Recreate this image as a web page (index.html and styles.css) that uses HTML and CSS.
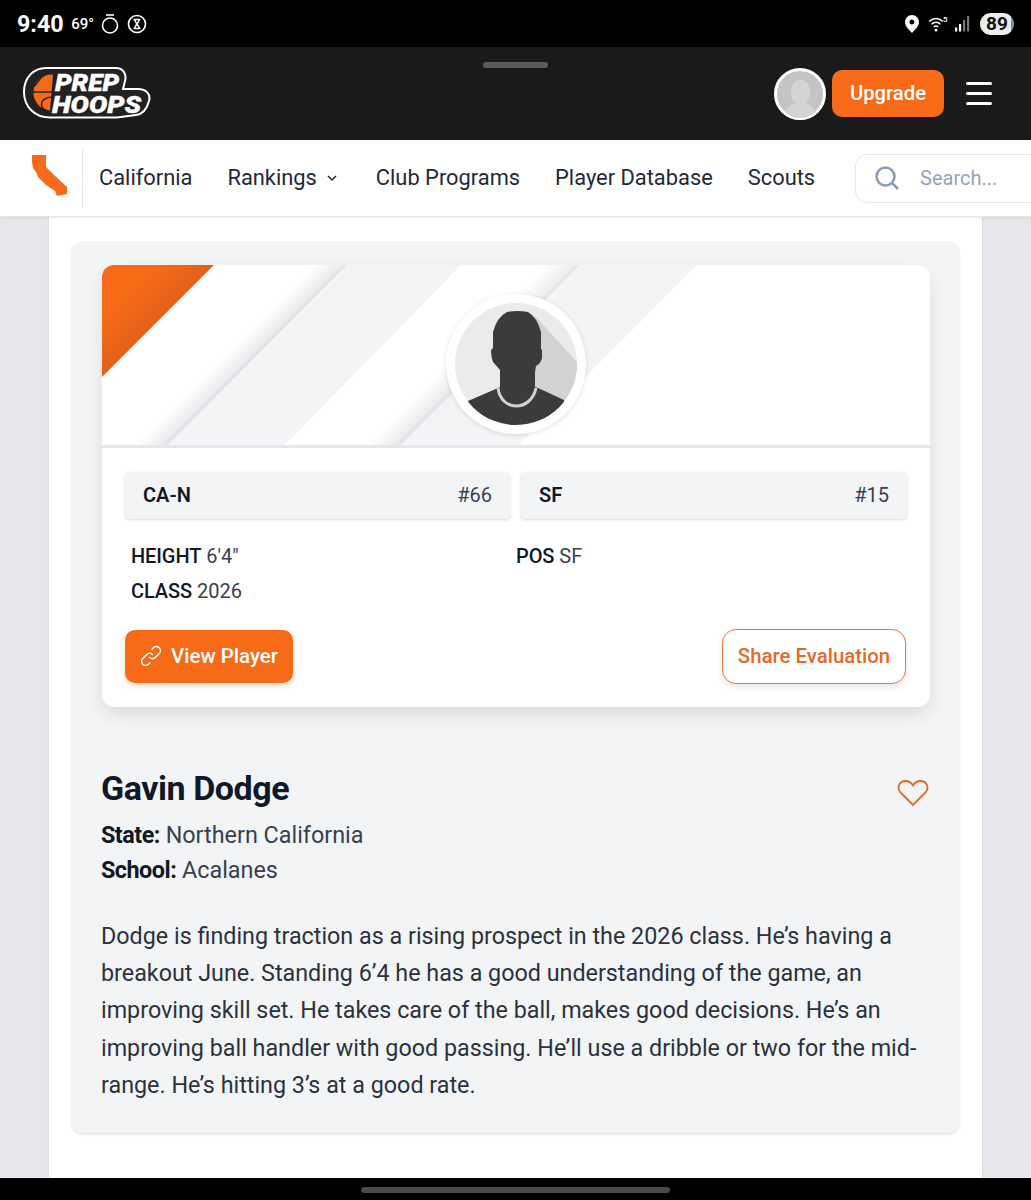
FILE: index.html
```html
<!DOCTYPE html>
<html lang="en">
<head>
<meta charset="utf-8">
<title>Gavin Dodge - Prep Hoops</title>
<link rel="stylesheet" href="styles.css">
</head>
<body>
<div class="status">
  <div class="status-left">
    <span class="clock">9:40</span>
    <span class="temp">69°</span>
    <svg class="st-ic" width="18" height="22" viewBox="0 0 18 22"><path d="M5 2h8" stroke="#fff" stroke-width="1.6"/><circle cx="9" cy="12.500" r="7.500" fill="none" stroke="#fff" stroke-width="1.600"/></svg>
    <svg class="st-ic" width="20" height="20" viewBox="0 0 20 20"><circle cx="10" cy="10" r="8.500" fill="none" stroke="#fff" stroke-width="1.700"/><path d="M6.500 5.500h7M6.500 14.500h7M7.500 5.500q1 2.500 2.500 4.500q1.500-2 2.500-4.500M7.500 14.500q1-2.500 2.500-4.500q1.500 2 2.500 4.500z" stroke="#fff" stroke-width="1.500" fill="none"/></svg>
  </div>
  <div class="status-right">
    <svg class="pin" width="14" height="18" viewBox="0 0 14 18"><path fill-rule="evenodd" d="M7 0a7 7 0 0 1 7 7c0 4-4 8-7 11-3-3-7-7-7-11a7 7 0 0 1 7-7zm0 4.500a2.500 2.500 0 1 0 0 5 2.500 2.500 0 0 0 0-5z" fill="#fff"/></svg>
    <svg class="wifi" width="20" height="16" viewBox="0 0 20 16"><g fill="none" stroke="#fff" stroke-width="1.500"><path d="M1 5.500q7-6 14 0M3.500 8.300q4.500-4 9 0M5.800 11q2.200-2 4.400 0"/></g><circle cx="8" cy="14" r="1.500" fill="#fff"/><text x="15" y="6" class="wifi5">5</text></svg>
    <svg width="17" height="17" viewBox="0 0 17 17"><path d="M1 12.500h2.200v4H1zM5 9h2.200v7.500H5z" fill="#fff"/><path d="M9 5h2.200v11.500H9zM13 1h2.200v15.500H13z" fill="#777"/></svg>
    <span class="battery">89</span>
  </div>
</div>

<header class="topbar">
  <svg class="logo" width="128" height="54" viewBox="23 67 128 54">
    <path d="M24 93C24 78 34 69 46 69H116C123 69 127 75 125 82L123 90H138C146 90 151 95 149 102C147 110 143 115 136 116L117 118.500H50C34 118.500 24 107 24 93Z" fill="#222" stroke="#fff" stroke-width="2"/>
    <path d="M53 75.500A18 18 0 1 0 50 111.500Z" fill="#f76a17"/>
    <path d="M46 75C37 80 38 88 30 89M29 93H52M47 112C38 108 40 99 52 98" fill="none" stroke="#222" stroke-width="1.400"/>
    <text class="logo-text"><tspan x="55" y="91.500" textLength="64" lengthAdjust="spacingAndGlyphs">PREP</tspan> <tspan x="52" y="113.500" textLength="89" lengthAdjust="spacingAndGlyphs">HOOPS</tspan></text>
  </svg>
  <div class="grabber"></div>
  <div class="top-actions">
    <svg class="user" width="52" height="52" viewBox="0 0 52 52">
      <circle cx="26" cy="26" r="24.500" fill="#c4c4c4" stroke="#fff" stroke-width="3"/>
      <ellipse cx="26.500" cy="24" rx="10" ry="12" fill="#d4d4d4"/>
      <path d="M11 44q4-7 11-9h9q7 2 11 9-7 6-16 6t-15-6z" fill="#d4d4d4"/>
    </svg>
    <a class="upgrade">Upgrade</a>
    <div class="burger"><i></i><i></i><i></i></div>
  </div>
</header>

<nav class="nav">
  <div class="state-cell">
    <svg width="37" height="44" viewBox="31 157 37 44"><path d="M32 158H46V170L54 178L67 190V197L57 199L55 194L46 188L38 180L36 175L33 171L32 165Z" fill="#f76a17"/></svg>
  </div>
  <ul class="nav-links">
    <li>California</li>
    <li class="has-caret">Rankings <svg width="10" height="7" viewBox="0 0 10 7"><path d="M1 1l4 4 4-4" fill="none" stroke="#1f2937" stroke-width="1.500"/></svg></li>
    <li>Club Programs</li>
    <li>Player Database</li>
    <li>Scouts</li>
  </ul>
  <div class="search">
    <svg width="26" height="26" viewBox="0 0 26 26"><circle cx="11.500" cy="11.500" r="9" fill="none" stroke="#8b9db3" stroke-width="2.600"/><path d="M18 18l6 6" stroke="#8b9db3" stroke-width="2.600"/></svg>
    <span>Search...</span>
  </div>
</nav>

<main class="page">
  <div class="column">
    <section class="panel">
      <article class="card">
        <div class="banner">
          <svg class="banner-art" width="828" height="180" viewBox="102 265 828 180" preserveAspectRatio="none">
            <defs>
              <linearGradient id="sh1" gradientUnits="userSpaceOnUse" x1="257" y1="355" x2="240" y2="338">
                <stop offset="0" stop-color="#e0e2e5"/>
                <stop offset="0.25" stop-color="#eeeff0"/>
                <stop offset="1" stop-color="#ffffff"/>
              </linearGradient>
              <linearGradient id="sh2" gradientUnits="userSpaceOnUse" x1="490" y1="355" x2="473" y2="338">
                <stop offset="0" stop-color="#e0e2e5"/>
                <stop offset="0.25" stop-color="#eeeff0"/>
                <stop offset="1" stop-color="#ffffff"/>
              </linearGradient>
              <linearGradient id="or" gradientUnits="userSpaceOnUse" x1="130" y1="293" x2="158" y2="321">
                <stop offset="0" stop-color="#f76a17"/>
                <stop offset="1" stop-color="#e2621a"/>
              </linearGradient>
            </defs>
            <polygon points="300,265 347,265 167,446 120,446" fill="url(#sh1)"/>
            <polygon points="533,265 580,265 400,446 353,446" fill="url(#sh2)"/>
            <polygon points="347,265 461,265 284,446 167,446" fill="#f3f4f6"/>
            <polygon points="580,265 697,265 517,446 400,446" fill="#f3f4f6"/>
            <polygon points="102,265 214,265 102,377" fill="url(#or)"/>
          </svg>
          <div class="avatar">
            <svg width="122" height="122" viewBox="0 0 122 122">
              <defs><clipPath id="ci"><circle cx="61" cy="61" r="61"/></clipPath></defs>
              <g clip-path="url(#ci)">
                <rect width="122" height="122" fill="#ebebeb"/>
                <path d="M80 13L123 60V122H60L60 60Z" fill="#d2d2d2"/>
                <path d="M52 9Q62 7 73 9Q82 14 86 29V46L87 47V55Q86 60 81 63L80 69V84L83 85L109 97V122H13V98L43 85L45 84V67L38 59Q36 54 36 47L38 45V29Q42 14 52 9Z" fill="#3b3b3b"/>
                <path d="M43 85C46 109 76 109 81 85" fill="none" stroke="#d2d2d2" stroke-width="3"/>
              </g>
            </svg>
          </div>
        </div>
        <div class="card-body">
          <div class="ranks">
            <div class="rank"><b>CA-N</b><span>#66</span></div>
            <div class="rank"><b>SF</b><span>#15</span></div>
          </div>
          <dl class="facts">
            <div><dt>HEIGHT</dt> <dd>6'4"</dd></div>
            <div><dt>POS</dt> <dd>SF</dd></div>
            <div><dt>CLASS</dt> <dd>2026</dd></div>
          </dl>
          <div class="buttons">
            <a class="btn-primary">
              <svg width="24" height="24" viewBox="0 0 24 24" fill="none" stroke="#fff" stroke-width="1.500" stroke-linecap="round"><path d="M10.500 13.500a4 4 0 0 0 5.700 0l4-4a4 4 0 0 0-5.700-5.700l-1.500 1.500"/><path d="M13.500 10.500a4 4 0 0 0-5.700 0l-4 4a4 4 0 0 0 5.700 5.700l1.500-1.500"/></svg>
              View Player
            </a>
            <a class="btn-outline">Share Evaluation</a>
          </div>
        </div>
      </article>

      <div class="detail">
        <div class="detail-head">
          <div>
            <h1>Gavin Dodge</h1>
            <p class="meta"><b>State:</b> Northern California</p>
            <p class="meta"><b>School:</b> Acalanes</p>
          </div>
          <svg class="heart" width="32" height="28" viewBox="0 0 32 28"><path d="M16 26L3.500 13.500C-1 8 3 2 8.500 2C12 2 14.500 4 16 6.500C17.500 4 20 2 23.500 2C29 2 33 8 28.500 13.500Z" fill="none" stroke="#e2672a" stroke-width="1.800"/></svg>
        </div>
        <p class="bio">Dodge is finding traction as a rising prospect in the 2026 class. He’s having a breakout June. Standing 6’4 he has a good understanding of the game, an improving skill set. He takes care of the ball, makes good decisions. He’s an improving ball handler with good passing. He’ll use a dribble or two for the mid-range. He’s hitting 3’s at a good rate.</p>
      </div>
    </section>
  </div>
</main>

<div class="navbar"><div class="home-pill"></div></div>
</body>
</html>
```

FILE: styles.css
```css
* { box-sizing: border-box; }
html, body { margin: 0; height: 1200px; overflow: hidden; }
body {
  display: flex;
  flex-direction: column;
  background: #e5e7eb;
  font-family: Roboto, "Liberation Sans", sans-serif;
  color: #1f2937;
}
p, h1, ul, dl, dd { margin: 0; padding: 0; }

.status {
  height: 47px;
  background: #000;
  color: #fff;
  display: flex;
  justify-content: space-between;
  align-items: center;
  padding: 0 17px;
  flex: none;
}
.status-left { display: flex; align-items: center; gap: 7.500px; }
.clock { font: 700 23.300px Roboto, sans-serif; }
.temp { font: 500 15px Roboto, sans-serif; }
.st-ic { display: block; }
.status-right { display: flex; align-items: center; gap: 9px; }
.wifi { margin-right: -3px; }
.pin { margin-left: 3px; }
.wifi5 { font: 500 8px Roboto, sans-serif; fill: #fff; }
.battery {
  width: 34px;
  height: 22px;
  border-radius: 11px;
  background: linear-gradient(90deg, #ececec 90%, #8a8a8a 90%);
  color: #111;
  font: 700 19px/22px Roboto, sans-serif;
  text-align: center;
}

.topbar {
  position: relative;
  height: 93px;
  background: #1a1a1a;
  display: flex;
  justify-content: space-between;
  align-items: center;
  padding: 0 39px 0 23px;
  flex: none;
}
.logo { display: block; margin-top: -1px; }
.logo-text { font: italic 900 23.500px Roboto, sans-serif; fill: #fff; stroke: #fff; stroke-width: 0.4px; }
.grabber {
  position: absolute;
  left: 483px;
  top: 15px;
  width: 65px;
  height: 6px;
  border-radius: 3px;
  background: #5a5a5a;
}
.top-actions { display: flex; align-items: center; }
.user { display: block; }
.upgrade {
  margin-left: 6px;
  width: 112px;
  height: 47px;
  border-radius: 10px;
  background: #f76a17;
  color: #fff;
  font: 500 20.300px/47px Roboto, sans-serif;
  text-align: center;
}
.burger { margin-left: 22px; width: 26px; display: flex; flex-direction: column; gap: 7px; }
.burger i { display: block; height: 3px; border-radius: 2px; background: #fff; }

.nav {
  height: 77px;
  background: #fff;
  display: flex;
  align-items: center;
  border-bottom: 1px solid #e5e7eb;
  box-shadow: 0 1px 3px rgba(0,0,0,.08);
  flex: none;
  position: relative;
  z-index: 1;
  overflow: hidden;
  white-space: nowrap;
}
.state-cell {
  flex: none;
  width: 83px;
  height: 60px;
  padding: 11px 0 0 31px;
  border-right: 1px solid #e5e7eb;
}
.state-cell svg { display: block; margin-top: -5px; }
.nav-links {
  list-style: none;
  display: flex;
  flex: none;
  gap: 35px;
  margin: -2px 0 0 16px;
  font-size: 21.850px;
  color: #1f2937;
}
.has-caret { display: flex; align-items: center; gap: 9px; }
.has-caret svg { margin: 2px 4px 0 1px; }
.search {
  margin-left: 40px;
  width: 220px;
  height: 49px;
  flex: none;
  border: 1px solid #e5e7eb;
  border-radius: 12px 0 0 12px;
  display: flex;
  align-items: center;
  gap: 20px;
  padding-left: 18px;
  color: #94a3b8;
  font-size: 20px;
}

.page { flex: 1; min-height: 0; overflow: hidden; padding: 0 49px; }
.column {
  height: 100%;
  background: #fff;
  padding: 24px 22px 0;
  box-shadow: 0 0 2px rgba(0,0,0,.1);
}
.panel {
  height: 892px;
  background: #f3f4f6;
  border-radius: 12px;
  padding: 24px 30px 0 31px;
  box-shadow: 0 2px 3px -1px rgba(0,0,0,.16);
}
.card {
  height: 442px;
  background: #fff;
  border-radius: 12px;
  box-shadow: 0 8px 20px -4px rgba(0,0,0,.14);
  overflow: hidden;
}
.banner {
  position: relative;
  height: 183px;
  border-bottom: 3px solid #e5e7eb;
  display: flex;
  justify-content: center;
  padding-top: 29px;
}
.banner-art { position: absolute; left: 0; top: 0; }
.avatar {
  position: relative;
  width: 140px;
  height: 140px;
  padding: 9px;
  border-radius: 50%;
  background: #fff;
  box-shadow: 0 1px 5px rgba(0,0,0,.12);
}
.avatar svg { display: block; }
.card-body { padding: 24px 23px 0; }
.ranks { display: grid; grid-template-columns: 385px 386px; gap: 11px; }
.rank {
  height: 47px;
  background: #f3f4f6;
  border-radius: 4px;
  box-shadow: 0 1px 3px rgba(0,0,0,.15);
  display: flex;
  justify-content: space-between;
  align-items: center;
  padding: 0 18px 2px 18px;
  font-size: 20px;
  color: #374151;
}
.rank b { color: #111827; font-weight: 600; }
.facts {
  display: grid;
  grid-template-columns: 385px 1fr;
  row-gap: 12px;
  margin: 26px 0 0 6px;
  font-size: 20px;
  line-height: 23px;
  color: #374151;
}
.facts dt { display: inline; font-weight: 500; color: #111827; letter-spacing: -0.1px; }
.facts dd { display: inline; }
.buttons {
  display: flex;
  justify-content: space-between;
  align-items: center;
  margin-top: 26px;
  padding-right: 1px;
}
.btn-primary {
  width: 168px;
  height: 53px;
  border-radius: 10px;
  background: #f76a17;
  color: #fff;
  font-size: 20.500px;
  font-weight: 500;
  display: flex;
  align-items: center;
  gap: 8px;
  padding: 0 0 2px 14px;
  box-shadow: 0 3px 6px rgba(249,107,23,.25);
}
.btn-outline {
  width: 184px;
  height: 55px;
  border: 1.500px solid #e57a3a;
  border-radius: 14px;
  background: #fff;
  color: #e26a2b;
  font: 500 20.400px/52px Roboto, sans-serif;
  text-align: center;
  box-shadow: 0 3px 6px rgba(0,0,0,.1);
}

.detail { padding-top: 60px; margin-left: -1px; }
.detail-head { display: flex; justify-content: space-between; align-items: flex-start; }
.detail h1 {
  font-size: 34px;
  line-height: 42px;
  font-weight: 700;
  letter-spacing: -0.45px;
  color: #111827;
  margin-bottom: 9px;
}
.meta { font-size: 23.350px; line-height: 35px; color: #374151; }
.meta b { color: #111827; font-weight: 700; letter-spacing: -0.5px; }
.heart { margin: 12px 1px 0 0; }
.bio { margin-top: 30px; font-size: 23.320px; line-height: 37.200px; color: #2b323c; }

.navbar {
  height: 22px;
  flex: none;
  background: #000;
  display: flex;
  justify-content: center;
  align-items: center;
  position: relative;
  z-index: 2;
}
.home-pill { width: 309px; height: 6px; border-radius: 3px; background: #4a4a4a; margin-top: 1px; }
```
